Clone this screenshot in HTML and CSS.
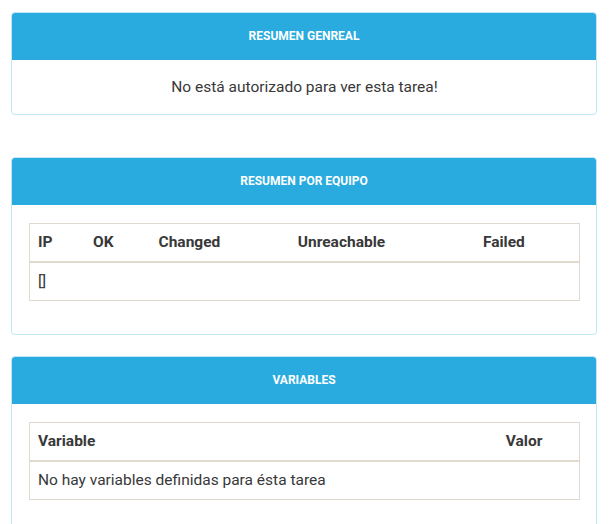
FILE: index.html
```html
<!DOCTYPE html>
<html lang="es">
<head>
<meta charset="utf-8">
<title>Resumen</title>
<link rel="stylesheet" href="styles.css">
</head>
<body>
<div class="page">
  <section class="card card-first">
    <div class="card-header">RESUMEN GENREAL</div>
    <div class="card-body center">No está autorizado para ver esta tarea!</div>
  </section>

  <section class="card card-second">
    <div class="card-header">RESUMEN POR EQUIPO</div>
    <div class="card-body">
      <table class="tbl">
        <thead>
          <tr><th>IP</th><th>OK</th><th>Changed</th><th>Unreachable</th><th>Failed</th></tr>
        </thead>
        <tbody>
          <tr><td>[]</td><td></td><td></td><td></td><td></td></tr>
        </tbody>
      </table>
    </div>
  </section>

  <section class="card card-third">
    <div class="card-header">VARIABLES</div>
    <div class="card-body">
      <table class="tbl">
        <thead>
          <tr><th>Variable</th><th>Valor</th></tr>
        </thead>
        <tbody>
          <tr><td>No hay variables definidas para ésta tarea</td><td></td></tr>
        </tbody>
      </table>
    </div>
  </section>
</div>
</body>
</html>
```

FILE: styles.css
```css
html, body {
  margin: 0;
  padding: 0;
  background: #ffffff;
}
body {
  font-family: Roboto, "Liberation Sans", sans-serif;
  color: #383838;
  font-size: 15.5px;
  line-height: 20px;
}
.page {
  padding: 12px 14px 0 11px;
}
.card {
  border: 1px solid #bfe8f2;
  border-radius: 4px;
  background: #fff;
  overflow: hidden;
}
.card-first { margin-bottom: 42px; }
.card-second { margin-bottom: 21px; }
.card-header {
  background: #29abe0;
  color: #fff;
  font-size: 12px;
  font-weight: 700;
  text-align: center;
  height: 48px;
  line-height: 48px;
  margin: -1px -1px 0 -1px;
  border-radius: 4px 4px 0 0;
}
.card-body {
  padding: 18px 16px 17px 17px;
}
.card-body.center {
  padding-top: 17px;
  text-align: center;
}
.tbl {
  width: 100%;
  border-collapse: collapse;
  border: 1px solid #e0d9cd;
  margin-bottom: 16px;
}
.tbl th, .tbl td {
  padding: 8px;
  text-align: left;
  line-height: 21px;
  border-top: 1px solid #e0d9cd;
}
.tbl th {
  font-weight: 700;
  border-bottom: 2px solid #e0d9cd;
}
```
